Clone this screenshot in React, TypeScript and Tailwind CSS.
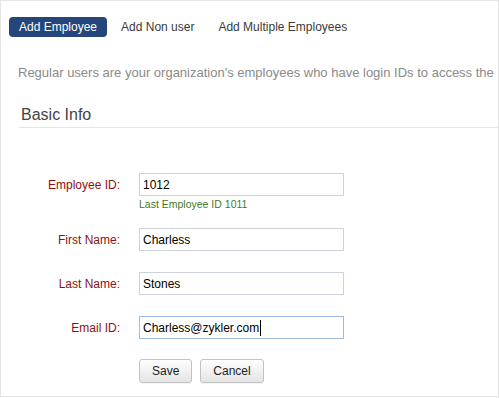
import type { ReactNode } from 'react'

const font = { fontFamily: '"Liberation Sans", Arial, Helvetica, sans-serif' }

interface FieldRowProps {
  label: string
  value: string
  focused?: boolean
  hint?: string
  className?: string
}

function TextBox({ value, focused }: { value: string; focused?: boolean }) {
  return (
    <div
      className={
        focused
          ? 'w-[205px] h-[23px] border border-[#9cbbe3] bg-white flex items-center pl-[3px] text-[12px] text-black'
          : 'w-[205px] h-[23px] border border-[#cdd3de] bg-white flex items-center pl-[3px] text-[12px] text-black'
      }
    >
      <span>{value}</span>
      {focused && <span className="ml-[1px] w-px h-[16px] bg-black" />}
    </div>
  )
}

function FieldRow({ label, value, focused, hint, className }: FieldRowProps) {
  return (
    <div className={`flex items-start gap-[19px] ${className ?? ''}`}>
      <div className="w-[119px] h-[23px] flex items-center justify-end text-[12px] text-[#8e1010]">
        {label}
      </div>
      <div className="flex flex-col">
        <TextBox value={value} focused={focused} />
        {hint && (
          <div className="mt-[2px] text-[10.5px] leading-[13px] text-[#3f7a1f]">{hint}</div>
        )}
      </div>
    </div>
  )
}

function Button({ children }: { children: ReactNode }) {
  return (
    <button className="h-[24px] px-3 border border-[#c3c3c3] rounded-[3px] bg-gradient-to-b from-[#fefefe] to-[#e4e4e4] text-[12px] text-[#222] shadow-[0_1px_0_rgba(0,0,0,0.04)]">
      {children}
    </button>
  )
}

export default function App() {
  const tabs = ['Add Employee', 'Add Non user', 'Add Multiple Employees']

  return (
    <div className="w-[500px] h-[398px] bg-white" style={font}>
      <div className="w-[499px] h-[397px] border border-[#e5e5e5] flex flex-col overflow-hidden">
        {/* Tabs */}
        <div className="flex items-center gap-[4px] mt-[16px] ml-[8px]">
          {tabs.map((t, i) => (
            <div
              key={t}
              className={
                i === 0
                  ? 'h-[20px] px-[10px] flex items-center rounded-[4px] bg-[#24467b] text-white text-[12px]'
                  : 'h-[20px] px-[10px] flex items-center text-[#3a3a3a] text-[12px]'
              }
            >
              {t}
            </div>
          ))}
        </div>

        {/* Description */}
        <p className="mt-[28px] ml-[17px] text-[13px] leading-[16px] text-[#8a8a8a] whitespace-nowrap">
          Regular users are your organization's employees who have login IDs to access the
        </p>

        {/* Section header */}
        <div className="mt-[24px] ml-[18px] border-b border-[#e5e5e5] pb-[2px] pl-[2px]">
          <h2 className="text-[16px] leading-[20px] text-[#444]">Basic Info</h2>
        </div>

        {/* Form */}
        <div className="flex flex-col mt-[45px]">
          <FieldRow label="Employee ID:" value="1012" hint="Last Employee ID 1011" />
          <FieldRow className="mt-[17px]" label="First Name:" value="Charless" />
          <FieldRow className="mt-[21px]" label="Last Name:" value="Stones" />
          <FieldRow className="mt-[21px]" label="Email ID:" value="Charless@zykler.com" focused />
          <div className="flex gap-2 mt-[20px] ml-[138px]">
            <Button>Save</Button>
            <Button>Cancel</Button>
          </div>
        </div>
      </div>
    </div>
  )
}
